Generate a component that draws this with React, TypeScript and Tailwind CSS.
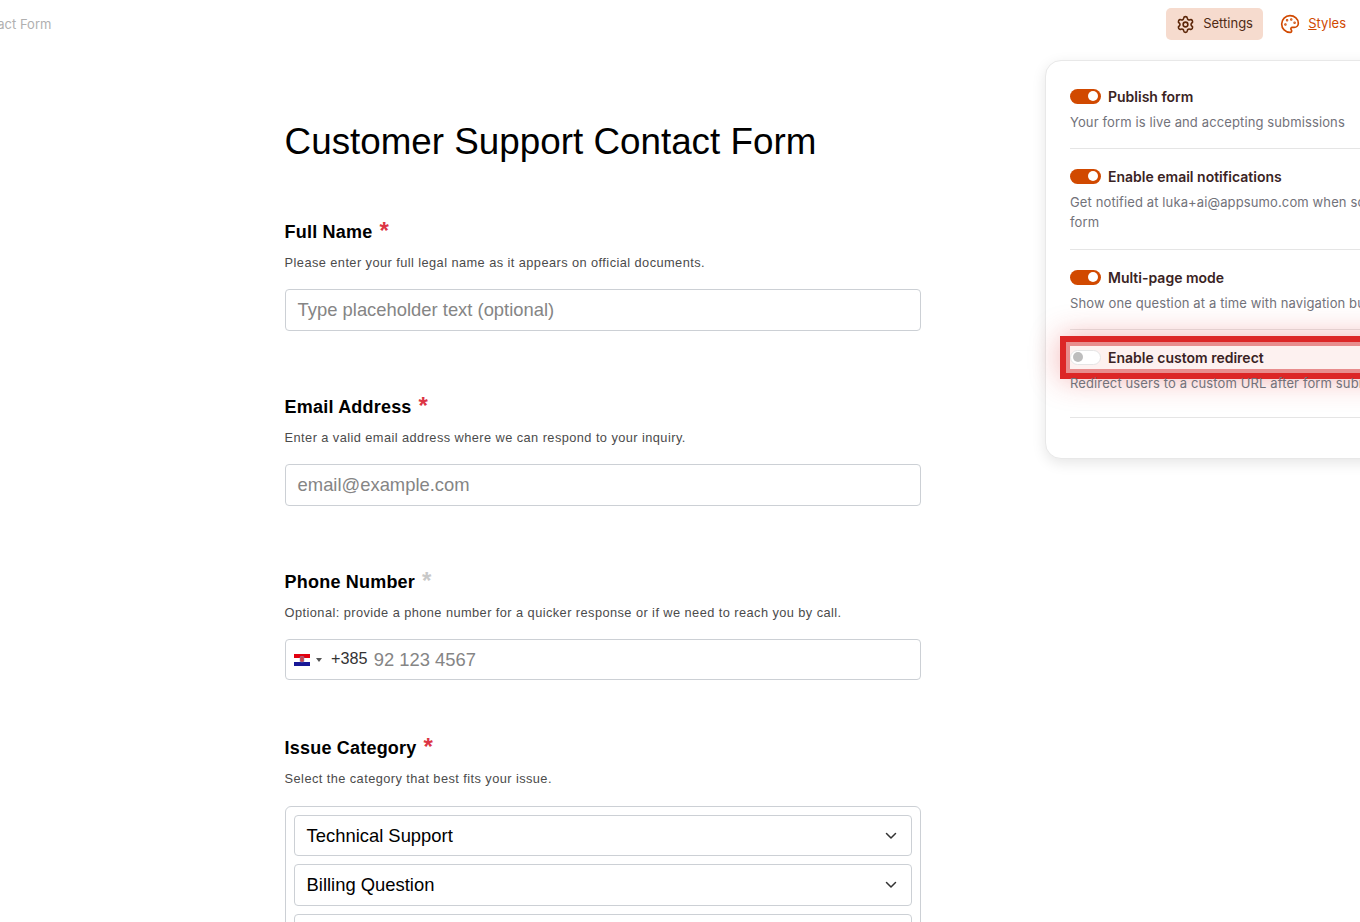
const inter = "font-['Inter',sans-serif]";

function Asterisk({ muted }: { muted?: boolean }) {
  return (
    <span className={`ml-[7px] text-[24px] leading-none font-bold relative top-[-1px] ${muted ? 'text-[#c8c8c8]' : 'text-[#dc3545]'}`}>*</span>
  );
}

function Label({ text, desc, muted }: { text: string; desc: string; muted?: boolean }) {
  return (
    <div>
      <div className="h-[24px] flex items-center text-[18px] font-bold text-black tracking-[0.2px]">
        {text}
        <Asterisk muted={muted} />
      </div>
      <p className="mt-[10px] h-[18px] text-[12.8px] leading-[18px] tracking-[0.43px] text-[#4b4b4b]">{desc}</p>
    </div>
  );
}

function Chevron() {
  return (
    <svg width="12" height="8" viewBox="0 0 12 8" fill="none" stroke="#333" strokeWidth="1.5" strokeLinecap="round" strokeLinejoin="round">
      <path d="M1.5 1.5 6 6l4.5-4.5" />
    </svg>
  );
}

function Toggle({ on }: { on?: boolean }) {
  return on ? (
    <span className="w-[31px] h-[15px] rounded-full bg-[#d14900] flex items-center justify-end pr-[3px] shrink-0">
      <span className="w-[10px] h-[10px] rounded-full bg-white" />
    </span>
  ) : (
    <span className="w-[31px] h-[15px] rounded-full bg-white border border-[#e5e5e5] flex items-center pl-[2px] shrink-0">
      <span className="w-[10px] h-[10px] rounded-full bg-[#bdbdbd]" />
    </span>
  );
}

function Setting({ title, desc, on, h }: { title: string; desc: string; on?: boolean; h: string }) {
  return (
    <div className={`border-b border-[#e5e5e5] ${h}`}>
      <div className="flex items-center gap-[7px] h-[16px]">
        <Toggle on={on} />
        <span className="text-[14px] font-semibold text-[#3a2323]">{title}</span>
      </div>
      <p className="mt-[8px] text-[13px] leading-[20px] text-[#72727a] tracking-[0.12px]">{desc}</p>
    </div>
  );
}

export default function App() {
  return (
    <div className="relative h-[922px] w-[1360px] overflow-hidden bg-white font-['Liberation_Sans',Arial,sans-serif]">
      <header className={`${inter} h-[48px] flex items-center justify-between`}>
        <span className="ml-[-32px] mt-[1px] text-[13px] text-[#b0b0b0]">Contact Form</span>
        <div className="flex items-center gap-[9px] pr-[5px]">
          <button className="flex items-center gap-[8px] h-[32px] w-[97px] pl-[10px] rounded-[5px] bg-[#f6dbce] text-[13px] text-[#4f2a14]">
            <svg width="19" height="19" viewBox="0 0 24 24" fill="none" stroke="#5c2608" strokeWidth="2" strokeLinecap="round" strokeLinejoin="round">
              <path d="M9.671 4.136a2.34 2.34 0 0 1 4.659 0 2.34 2.34 0 0 0 3.319 1.915 2.34 2.34 0 0 1 2.33 4.033 2.34 2.34 0 0 0 0 3.831 2.34 2.34 0 0 1-2.33 4.033 2.34 2.34 0 0 0-3.319 1.915 2.34 2.34 0 0 1-4.659 0 2.34 2.34 0 0 0-3.32-1.915 2.34 2.34 0 0 1-2.33-4.033 2.34 2.34 0 0 0 0-3.831A2.34 2.34 0 0 1 6.35 6.051a2.34 2.34 0 0 0 3.319-1.915" />
              <circle cx="12" cy="12" r="3" />
            </svg>
            Settings
          </button>
          <button className="flex items-center gap-[8px] h-[32px] pl-[8px] pr-[9px] text-[13px] text-[#d14900]">
            <svg width="20" height="20" viewBox="0 0 24 24" fill="none" stroke="#d14900" strokeWidth="2" strokeLinecap="round" strokeLinejoin="round">
              <path d="M12 22a1 1 0 0 1 0-20 10 9 0 0 1 10 9 5 5 0 0 1-5 5h-2.25a1.75 1.75 0 0 0-1.4 2.8l.3.4a1.75 1.75 0 0 1-1.4 2.8z" />
              <circle cx="13.5" cy="6.5" r=".5" fill="#d14900" />
              <circle cx="17.5" cy="10.5" r=".5" fill="#d14900" />
              <circle cx="6.5" cy="12.5" r=".5" fill="#d14900" />
              <circle cx="8.5" cy="7.5" r=".5" fill="#d14900" />
            </svg>
            <span><span className="underline">S</span>tyles</span>
          </button>
        </div>
      </header>

      <main className="ml-[284.6px] w-[636.4px] pt-[71px]">
        <h1 className="h-[46px] text-[36.8px] leading-[46px] text-black font-normal">Customer Support Contact Form</h1>

        <section className="mt-[55px]">
          <Label text="Full Name" desc="Please enter your full legal name as it appears on official documents." />
          <div className="mt-[17px] h-[42px] rounded-[4px] border border-[#ccd0d5] px-[12px] flex items-center text-[18.4px] text-[#858585]">Type placeholder text (optional)</div>
        </section>

        <section className="mt-[64px]">
          <Label text="Email Address" desc="Enter a valid email address where we can respond to your inquiry." />
          <div className="mt-[17px] h-[42px] rounded-[4px] border border-[#ccd0d5] px-[12px] flex items-center text-[18.4px] text-[#858585]">email@example.com</div>
        </section>

        <section className="mt-[64px]">
          <Label text="Phone Number" desc="Optional: provide a phone number for a quicker response or if we need to reach you by call." muted />
          <div className="mt-[17px] h-[41px] rounded-[4px] border border-[#ccd0d5] pl-[8px] flex items-center text-[18.4px] text-[#858585]">
            <svg width="16" height="12" viewBox="0 0 16 12" className="shrink-0">
              <rect width="16" height="4" fill="#e1000f" />
              <rect y="4" width="16" height="4" fill="#ffffff" />
              <rect y="8" width="16" height="4" fill="#171796" />
              <rect x="6" y="2.5" width="4" height="5.5" rx="1" fill="#c9434b" stroke="#7d8fc4" strokeWidth="0.5" />
            </svg>
            <span className="ml-[6px] w-0 h-0 border-x-[3px] border-x-transparent border-t-[4px] border-t-[#555]" />
            <span className="ml-[9.4px] text-[16.2px] text-[#333] relative top-[-1px]">+385</span>
            <span className="ml-[6.3px]">92 123 4567</span>
          </div>
        </section>

        <section className="mt-[56px]">
          <Label text="Issue Category" desc="Select the category that best fits your issue." />
          <div className="mt-[18px] rounded-[6px] border border-[#ccd0d5] p-[8px] flex flex-col gap-[8px]">
            {['Technical Support', 'Billing Question', 'Account Access'].map((o) => (
              <div key={o} className="h-[41.3px] rounded-[4px] border border-[#ccd0d5] pl-[12px] pr-[14px] flex items-center justify-between text-[18.4px] text-black">
                {o}
                <Chevron />
              </div>
            ))}
          </div>
        </section>
      </main>

      <aside className={`${inter} absolute left-[1045px] top-[60px] w-[490px] h-[399px] rounded-[16px] bg-white border border-[#e8e8e8] shadow-[0_4px_14px_rgba(0,0,0,0.1)] px-[24px] pt-[27px]`}>
        <Setting title="Publish form" desc="Your form is live and accepting submissions" on h="h-[61px]" />
        <div className="mt-[19px]">
          <Setting title="Enable email notifications" desc="Get notified at luka+ai@appsumo.com when someone submits your form" on h="h-[82px]" />
        </div>
        <div className="mt-[19px]">
          <Setting title="Multi-page mode" desc="Show one question at a time with navigation buttons" on h="h-[61px]" />
        </div>
        <div className="mt-[19px] relative">
          <span className="absolute left-[-10px] right-[-10px] top-[-13px] h-[43px] border-[6px] border-[#dc2626] bg-[#fdf1f0] shadow-[0_0_30px_rgba(220,38,38,0.35),inset_0_0_0_4px_rgba(230,130,130,0.9)]" />
          <div className="relative">
            <Setting title="Enable custom redirect" desc="Redirect users to a custom URL after form submission" h="h-[69px]" />
          </div>
        </div>
      </aside>
    </div>
  );
}
